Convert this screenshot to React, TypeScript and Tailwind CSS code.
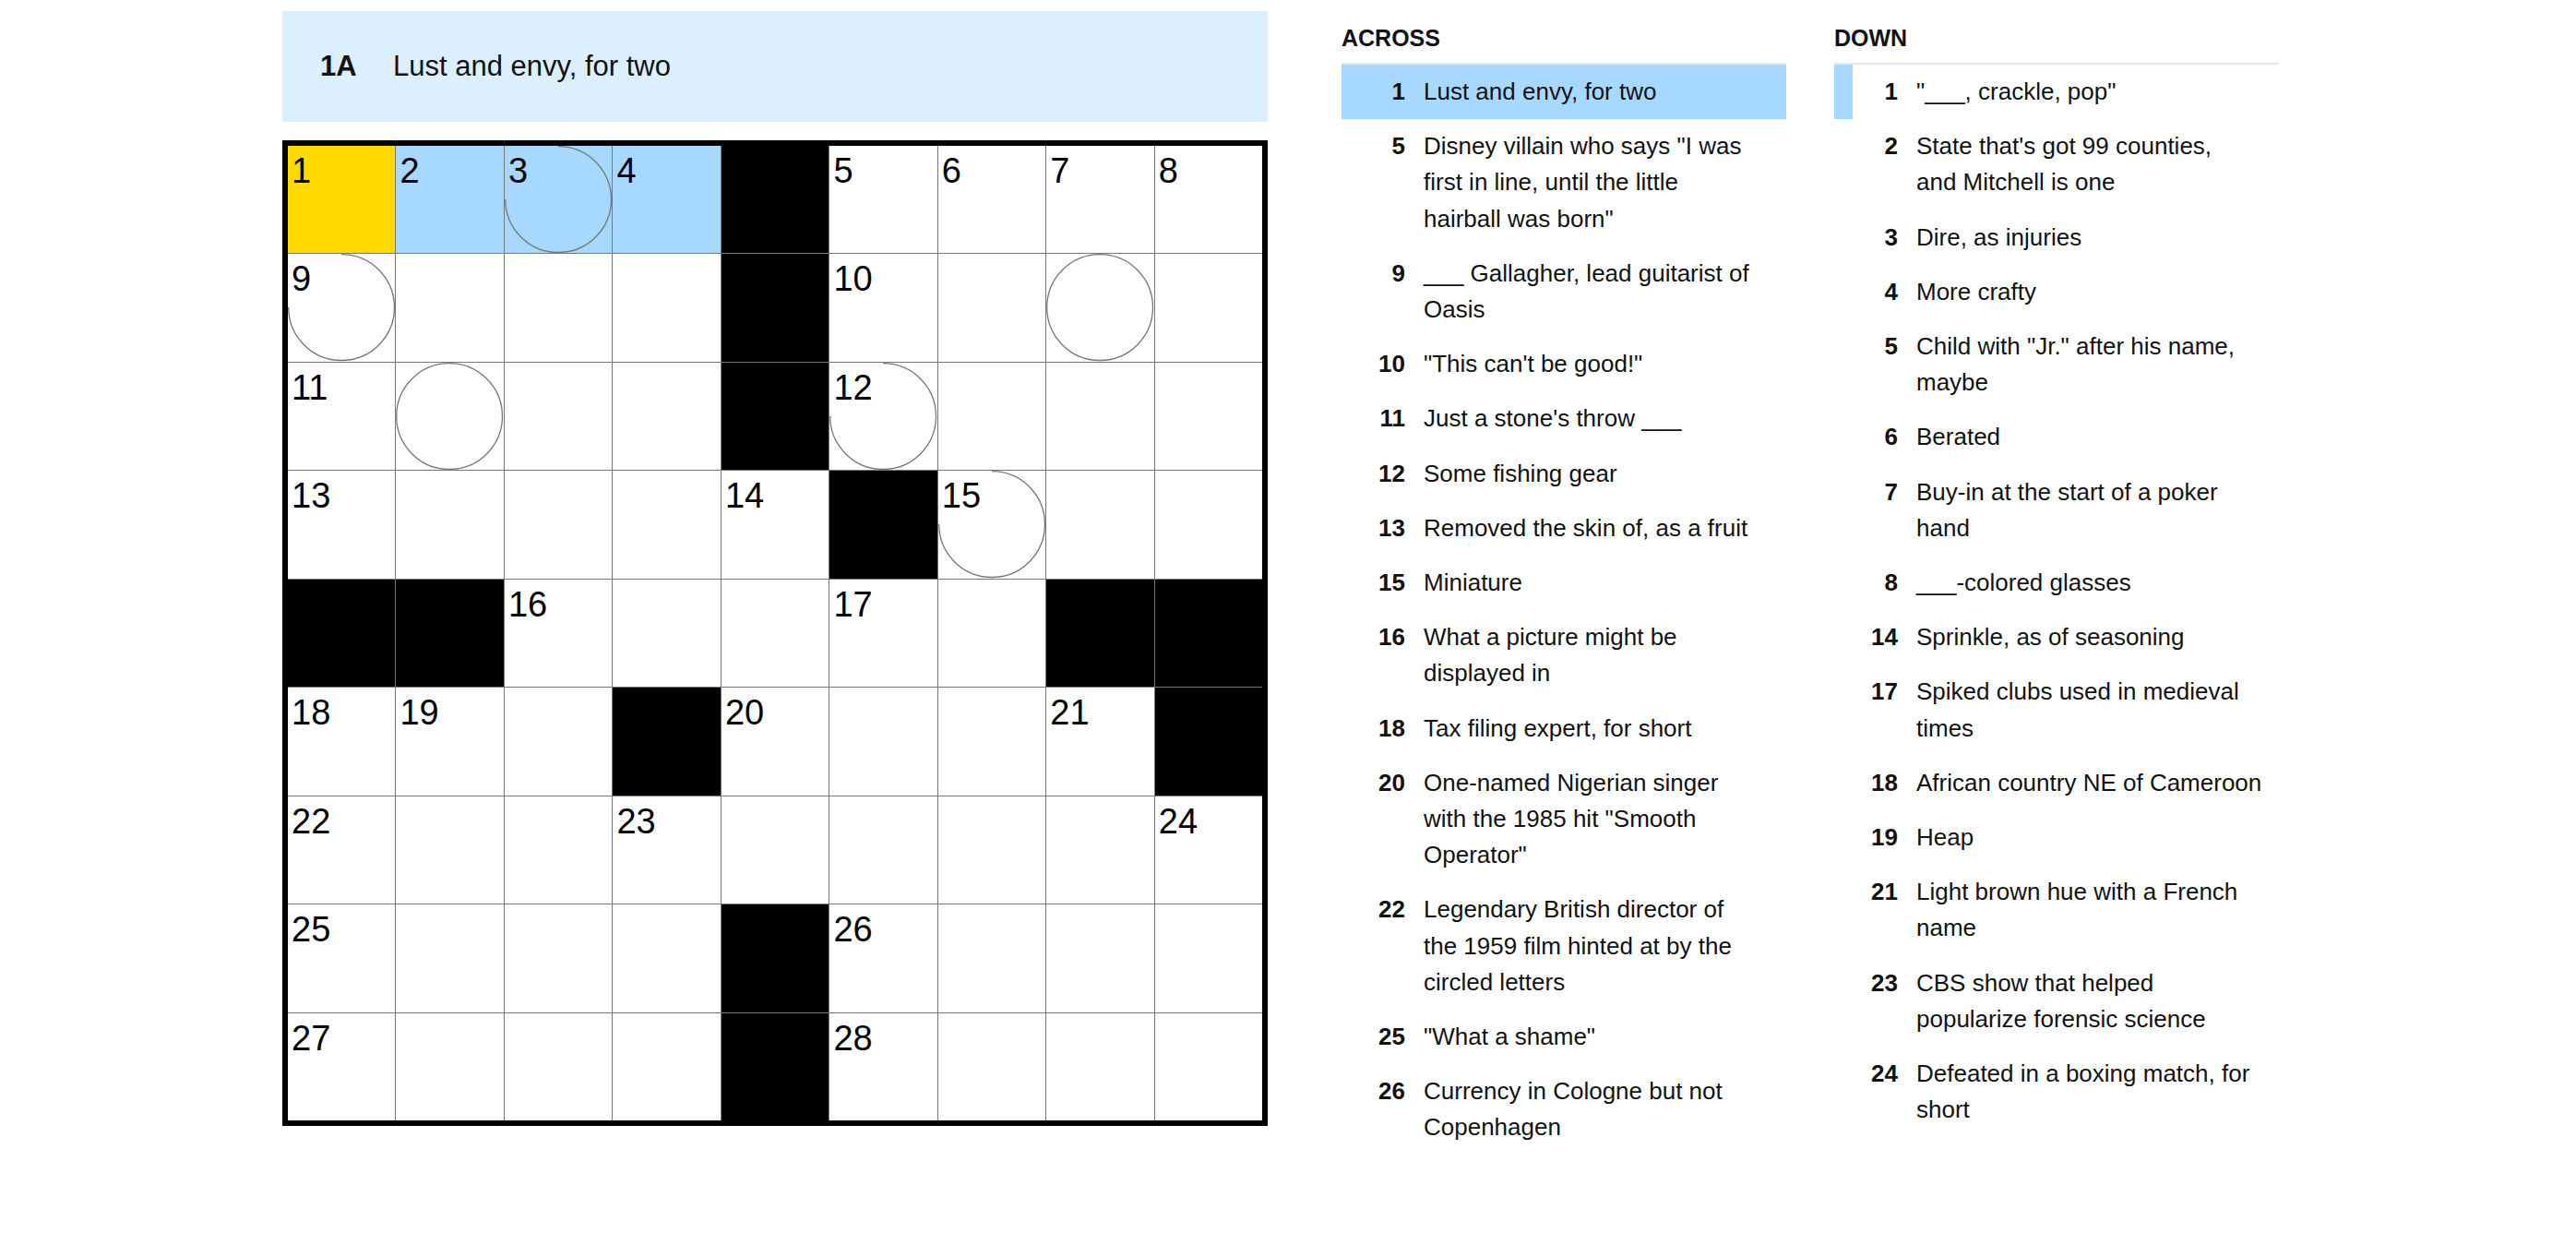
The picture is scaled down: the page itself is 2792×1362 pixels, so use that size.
import React from 'react';

// '#' = black square, '.' = open square
const GRID = [
  '....#....',
  '....#....',
  '....#....',
  '.....#...',
  '##.....##',
  '...#....#',
  '.........',
  '....#....',
  '....#....',
];

const CIRCLES = new Set(['0-2', '1-0', '1-7', '2-1', '2-5', '3-6']);
const ACTIVE = '0-0';
const WORD = new Set(['0-1', '0-2', '0-3']);

type Clue = { n: number; text: string; active?: boolean; cross?: boolean };

const ACROSS: Clue[] = [
  { n: 1, text: 'Lust and envy, for two', active: true },
  { n: 5, text: 'Disney villain who says "I was\nfirst in line, until the little\nhairball was born"' },
  { n: 9, text: '___ Gallagher, lead guitarist of\nOasis' },
  { n: 10, text: '"This can\'t be good!"' },
  { n: 11, text: "Just a stone's throw ___" },
  { n: 12, text: 'Some fishing gear' },
  { n: 13, text: 'Removed the skin of, as a fruit' },
  { n: 15, text: 'Miniature' },
  { n: 16, text: 'What a picture might be\ndisplayed in' },
  { n: 18, text: 'Tax filing expert, for short' },
  { n: 20, text: 'One-named Nigerian singer\nwith the 1985 hit "Smooth\nOperator"' },
  { n: 22, text: 'Legendary British director of\nthe 1959 film hinted at by the\ncircled letters' },
  { n: 25, text: '"What a shame"' },
  { n: 26, text: 'Currency in Cologne but not\nCopenhagen' },
];

const DOWN: Clue[] = [
  { n: 1, text: '"___, crackle, pop"', cross: true },
  { n: 2, text: "State that's got 99 counties,\nand Mitchell is one" },
  { n: 3, text: 'Dire, as injuries' },
  { n: 4, text: 'More crafty' },
  { n: 5, text: 'Child with "Jr." after his name,\nmaybe' },
  { n: 6, text: 'Berated' },
  { n: 7, text: 'Buy-in at the start of a poker\nhand' },
  { n: 8, text: '___-colored glasses' },
  { n: 14, text: 'Sprinkle, as of seasoning' },
  { n: 17, text: 'Spiked clubs used in medieval\ntimes' },
  { n: 18, text: 'African country NE of Cameroon' },
  { n: 19, text: 'Heap' },
  { n: 21, text: 'Light brown hue with a French\nname' },
  { n: 23, text: 'CBS show that helped\npopularize forensic science' },
  { n: 24, text: 'Defeated in a boxing match, for\nshort' },
];

const isOpen = (r: number, c: number) =>
  r >= 0 && r < 9 && c >= 0 && c < 9 && GRID[r][c] === '.';

// standard numbering: a square gets a number when it starts an across or down entry
function numberGrid() {
  const nums: Record<string, number> = {};
  let n = 0;
  for (let r = 0; r < 9; r++) {
    for (let c = 0; c < 9; c++) {
      if (!isOpen(r, c)) continue;
      const across = !isOpen(r, c - 1) && isOpen(r, c + 1);
      const down = !isOpen(r - 1, c) && isOpen(r + 1, c);
      if (across || down) nums[`${r}-${c}`] = ++n;
    }
  }
  return nums;
}

function Circle({ numbered }: { numbered: boolean }) {
  return (
    <svg className="pointer-events-none absolute inset-0 h-full w-full" viewBox="0 0 100 100" preserveAspectRatio="none">
      {numbered ? (
        <path d="M50 0.6 A49.4 49.4 0 1 1 0.6 50" fill="none" stroke="#777777" strokeWidth={1.3} vectorEffect="non-scaling-stroke" />
      ) : (
        <circle cx="50" cy="50" r="49.4" fill="none" stroke="#777777" strokeWidth={1.3} vectorEffect="non-scaling-stroke" />
      )}
    </svg>
  );
}

function Board() {
  const nums = numberGrid();
  const cells = [];
  for (let r = 0; r < 9; r++) {
    for (let c = 0; c < 9; c++) {
      const key = `${r}-${c}`;
      if (!isOpen(r, c)) {
        cells.push(<div key={key} className="bg-black" />);
        continue;
      }
      const bg = key === ACTIVE ? 'bg-[#ffda00]' : WORD.has(key) ? 'bg-[#a7d8ff]' : 'bg-white';
      const num = nums[key];
      cells.push(
        <div key={key} className={`relative ${bg}`}>
          {CIRCLES.has(key) && <Circle numbered={!!num} />}
          {num && (
            <span className="absolute left-[4px] top-[8px] text-[38px] leading-none text-black">{num}</span>
          )}
        </div>
      );
    }
  }
  return (
    <div className="mt-[20px] grid h-[1068px] w-[1068px] grid-cols-9 grid-rows-9 gap-[1.3px] border-[6px] border-black bg-[#777777]">
      {cells}
    </div>
  );
}

function ClueList({ title, clues }: { title: string; clues: Clue[] }) {
  return (
    <div className="w-[482px] shrink-0">
      <h3 className="mb-[12px] text-[25px] font-bold leading-[30px]">{title}</h3>
      <ol className="border-t-2 border-[#e6e6e6]">
        {clues.map((clue) => (
          <li
            key={clue.n}
            className={`flex border-l-[20px] py-[10px] text-[26px] leading-[39.2px] ${
              clue.active ? 'border-transparent bg-[#a7d8ff]' : clue.cross ? 'border-[#a7d8ff]' : 'border-transparent'
            }`}
          >
            <span className="w-[49px] shrink-0 text-right font-bold">{clue.n}</span>
            <span className="ml-[20px] whitespace-pre-line">{clue.text}</span>
          </li>
        ))}
      </ol>
    </div>
  );
}

export default function App() {
  return (
    <div className="min-h-screen bg-white font-['Liberation_Sans',Arial,sans-serif] text-[#121212]">
      <div className="flex items-start pl-[306px] pt-[12px]">
        <div className="w-[1068px] shrink-0">
          <div className="flex h-[120px] items-center bg-[#dcefff] pl-[41px] text-[31px]">
            <span className="w-[79px] shrink-0 font-bold">1A</span>
            <span>Lust and envy, for two</span>
          </div>
          <Board />
        </div>
        <div className="ml-[80px] flex gap-[52px] pt-[14px]">
          <ClueList title="ACROSS" clues={ACROSS} />
          <ClueList title="DOWN" clues={DOWN} />
        </div>
      </div>
    </div>
  );
}
